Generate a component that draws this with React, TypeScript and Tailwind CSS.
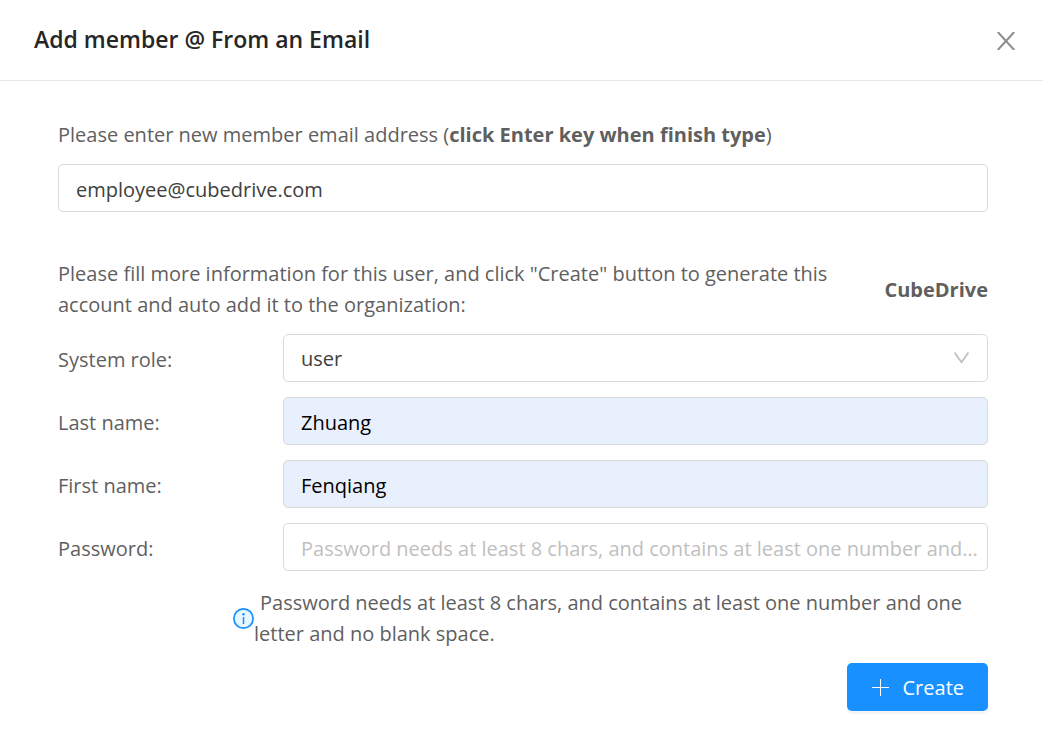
import { useState } from "react";

const fieldClass =
  "block h-12 w-full min-w-0 rounded-[5px] border border-[#d9d9d9] px-[17px] pt-[2px] text-xl outline-none focus:border-[#40a9ff]";

const labelClass = "pt-[2px]";

const nameFields = [
  { id: "lastName", label: "Last name:", value: "Zhuang" },
  { id: "firstName", label: "First name:", value: "Fenqiang" },
];

function CloseIcon() {
  return (
    <svg width="18" height="18" viewBox="0 0 18 18" fill="none" stroke="#8c8c8c" strokeWidth="2">
      <path d="M0.8 0L17.2 18M17.2 0L0.8 18" />
    </svg>
  );
}

function ChevronIcon() {
  return (
    <svg
      className="pointer-events-none absolute top-[18px] right-[19px]"
      width="15"
      height="12"
      viewBox="0 0 15 12"
      fill="none"
      stroke="#bfbfbf"
      strokeWidth="1.7"
    >
      <path d="M0.6 0.6L7.5 10.2L14.4 0.6" />
    </svg>
  );
}

function InfoIcon() {
  return (
    <svg className="shrink-0" width="21" height="21" viewBox="0 0 21 21">
      <circle cx="10.5" cy="10.5" r="9.6" fill="#e6f7ff" stroke="#1890ff" strokeWidth="1.7" />
      <circle cx="10.5" cy="6.2" r="1.2" fill="#1890ff" />
      <path d="M10.5 9v7" stroke="#1890ff" strokeWidth="1.5" />
    </svg>
  );
}

function PlusIcon() {
  return (
    <svg width="17" height="17" viewBox="0 0 17 17" stroke="currentColor" strokeWidth="1">
      <path d="M8.5 0v17M0 8.5h17" />
    </svg>
  );
}

export default function App() {
  const [email, setEmail] = useState("employee@cubedrive.com");
  const [role, setRole] = useState("user");

  return (
    <div className="bg-white font-['Open_Sans','Noto_Sans',sans-serif] text-xl leading-[31px] text-[#5f5f5f]">
      <header className="flex h-[81px] items-center justify-between border-b border-[#e8e8e8] pr-7 pl-[34px]">
        <h1 className="pb-[2px] text-[23px] font-semibold text-[#262626]">Add member @ From an Email</h1>
        <button type="button" aria-label="Close" className="pt-[2px]">
          <CloseIcon />
        </button>
      </header>

      <form className="pt-[38px] pr-[55px] pb-[26px] pl-[58px]" onSubmit={(e) => e.preventDefault()}>
        <label htmlFor="email" className="mb-[14px] block">
          Please enter new member email address (<b>click Enter key when finish type</b>)
        </label>
        <input
          id="email"
          type="email"
          value={email}
          onChange={(e) => setEmail(e.target.value)}
          className={`${fieldClass} text-[#404040]`}
        />

        <div className="mt-[46px] flex items-center justify-between gap-12">
          <p>
            Please fill more information for this user, and click "Create" button to generate this account and auto
            add it to the organization:
          </p>
          <b>CubeDrive</b>
        </div>

        <div className="mt-[14px] grid grid-cols-[225px_minmax(0,1fr)] items-center gap-y-[15px]">
          <label htmlFor="role" className={labelClass}>System role:</label>
          <div className="relative">
            <select
              id="role"
              value={role}
              onChange={(e) => setRole(e.target.value)}
              className={`${fieldClass} appearance-none bg-white text-[#404040]`}
            >
              <option value="user">user</option>
              <option value="admin">admin</option>
            </select>
            <ChevronIcon />
          </div>

          {nameFields.map((field) => (
            <div key={field.id} className="contents">
              <label htmlFor={field.id} className={labelClass}>{field.label}</label>
              <input
                id={field.id}
                type="text"
                defaultValue={field.value}
                className={`${fieldClass} bg-[#e8effd] text-black`}
              />
            </div>
          ))}

          <label htmlFor="password" className={labelClass}>Password:</label>
          <input
            id="password"
            type="password"
            placeholder="Password needs at least 8 chars, and contains at least one number and one letter"
            className={`${fieldClass} pr-2 text-ellipsis placeholder:text-[#bfbfbf]`}
          />
        </div>

        <div className="mt-4 ml-[175px] flex items-center">
          <InfoIcon />
          <p className="indent-[6px]">
            Password needs at least 8 chars, and contains at least one number and one letter and no blank space.
          </p>
        </div>

        <div className="mt-[14px] flex justify-end">
          <button
            type="submit"
            className="flex h-12 items-center gap-[14px] rounded-[5px] bg-[#1890ff] pr-6 pl-[25px] text-white shadow-[0_3px_0_rgba(0,0,0,0.04)]"
          >
            <PlusIcon />
            Create
          </button>
        </div>
      </form>
    </div>
  );
}
